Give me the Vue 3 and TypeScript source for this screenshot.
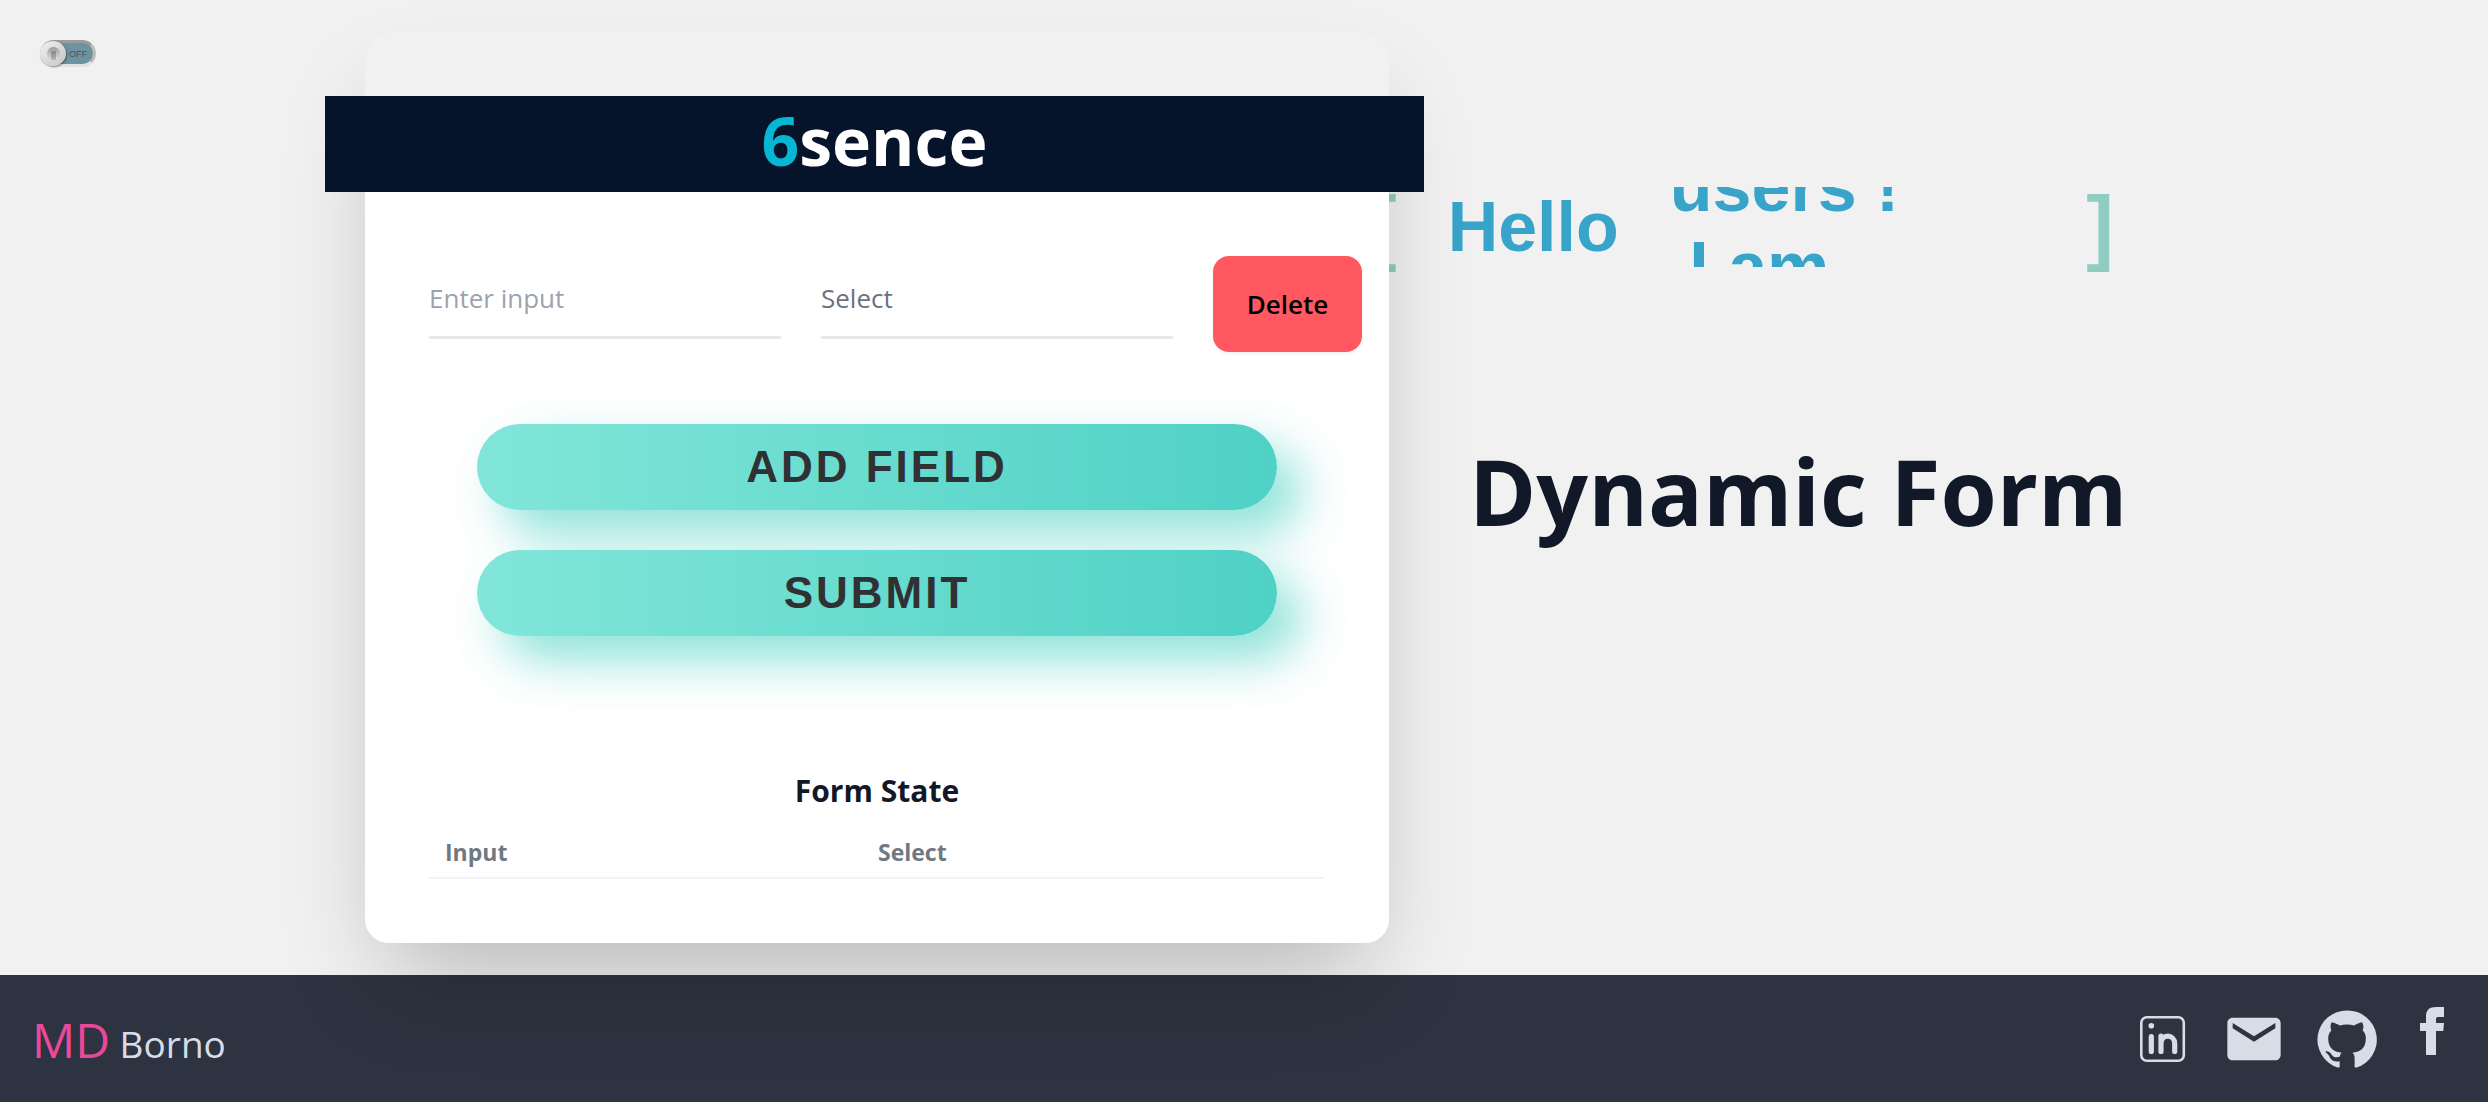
<script setup lang="ts">
import { ref } from 'vue'

interface Field {
  id: number
  text: string
  choice: string
}

const dark = ref(false)
const fields = ref<Field[]>([{ id: 1, text: '', choice: '' }])
const saved = ref<Field[]>([])
const phrases: string[] = ['users !', ' I am']

function addField(): void {
  fields.value.push({ id: Date.now(), text: '', choice: '' })
}

function removeField(id: number): void {
  fields.value = fields.value.filter((f) => f.id !== id)
}

function submit(): void {
  saved.value = fields.value.map((f) => ({ ...f }))
}
</script>

<template>
  <div class="page">
    <main class="main">
      <div class="theme">
        <label class="toggle">
          <input v-model="dark" type="checkbox" aria-label="Dark theme" />
          <span class="toggle-text">OFF</span>
          <span class="knob"><span class="knob-dip"></span></span>
        </label>
      </div>

      <section class="card">
        <header class="banner">
          <h2 class="logo"><span class="logo-mark">6</span>sence</h2>
        </header>
        <div class="body">
          <form @submit.prevent="submit">
            <div v-for="f in fields" :key="f.id" class="row">
              <input v-model="f.text" class="field" type="text" placeholder="Enter input" aria-label="Input" />
              <select v-model="f.choice" class="field" aria-label="Select">
                <option value="">Select</option>
                <option value="one">Option 1</option>
                <option value="two">Option 2</option>
              </select>
              <button class="delete" type="button" @click="removeField(f.id)">Delete</button>
            </div>
            <div class="actions">
              <button class="pill" type="button" @click="addField">ADD FIELD</button>
              <button class="pill" type="submit">SUBMIT</button>
            </div>
          </form>

          <h3 class="state-title">Form State</h3>
          <table class="state">
            <thead>
              <tr>
                <th scope="col">Input</th>
                <th scope="col">Select</th>
              </tr>
            </thead>
            <tbody>
              <tr v-for="s in saved" :key="s.id">
                <td>{{ s.text }}</td>
                <td>{{ s.choice }}</td>
              </tr>
            </tbody>
          </table>
        </div>
      </section>

      <section class="intro">
        <div class="greeting">
          <span class="bracket">[</span>
          <span class="hello">Hello</span>
          <ul class="phrases">
            <li v-for="p in phrases" :key="p">{{ p }}</li>
          </ul>
          <span class="bracket">]</span>
        </div>
        <h1 class="title">Dynamic Form</h1>
      </section>
    </main>

    <footer class="footer">
      <p class="brand"><span class="brand-first">MD</span> Borno</p>
      <nav class="social">
        <a href="#linkedin" aria-label="LinkedIn">
          <svg width="64" height="64" viewBox="0 0 64 64" fill="none" stroke="currentColor" stroke-linecap="round">
            <rect x="12.3" y="10.3" width="42.5" height="43.5" rx="5.5" stroke-width="2.6" />
            <circle cx="22.3" cy="18.8" r="2.8" fill="currentColor" stroke="none" />
            <path d="M22.3 29.5V44.5M32 44.5V29M32 36.5c0-4.2 3-7.3 6.8-7.3s6.9 3.1 6.9 7.3v8" stroke-width="5.2" />
          </svg>
        </a>
        <a href="#mail" aria-label="Email">
          <svg width="64" height="64" viewBox="0 0 24 24" fill="currentColor">
            <path d="M20 4H4c-1.1 0-1.99.9-1.99 2L2 18c0 1.1.9 2 2 2h16c1.1 0 2-.9 2-2V6c0-1.1-.9-2-2-2zm0 4l-8 5-8-5V6l8 5 8-5v2z" />
          </svg>
        </a>
        <a href="#github" aria-label="GitHub">
          <svg width="64" height="64" viewBox="0 0 24 24" fill="currentColor">
            <path d="M12 1.27a11 11 0 00-3.48 21.46c.55.09.73-.28.73-.55v-1.84c-3.03.64-3.67-1.46-3.67-1.46-.55-1.29-1.28-1.65-1.28-1.65-.92-.65.1-.65.1-.65 1.1 0 1.73 1.1 1.73 1.1.92 1.65 2.57 1.2 3.21.92a2 2 0 01.64-1.47c-2.47-.27-5.04-1.19-5.04-5.5 0-1.1.46-2.1 1.2-2.84a3.76 3.76 0 010-2.93s.91-.28 3.11 1.1c1.8-.49 3.7-.49 5.5 0 2.1-1.38 3.02-1.1 3.02-1.1a3.76 3.76 0 01.1 2.93c.83.74 1.2 1.74 1.2 2.94 0 4.21-2.57 5.13-5.04 5.4.45.37.82.92.82 2.02v3.03c0 .27.1.64.73.55A11 11 0 0012 1.27" />
          </svg>
        </a>
        <a href="#facebook" aria-label="Facebook">
          <svg width="48" height="48" viewBox="0 0 24 24" fill="currentColor">
            <path d="M9 8h-3v4h3v12h5v-12h3.642l.358-4h-4v-1.667c0-.955.192-1.333 1.115-1.333h2.885v-5h-3.808c-3.596 0-5.192 1.583-5.192 4.615v3.385z" />
          </svg>
        </a>
      </nav>
    </footer>
  </div>
</template>

<style>
body {
  margin: 0;
  background: #f1f1f1;
}
</style>

<style scoped>
.page {
  display: flex;
  flex-direction: column;
  min-height: 100vh;
  font-family: 'Open Sans', 'Noto Sans', sans-serif;
  color: #111827;
}

.page *,
.page *::before {
  box-sizing: border-box;
}

h1,
h2,
h3,
p,
ul {
  margin: 0;
  padding: 0;
}

.main {
  display: grid;
  grid-template-columns: 1fr minmax(0, 1024px) minmax(0, 734px) 1fr;
  padding: 32px 0;
}

.theme {
  padding: 8px 0 0 40px;
}

/* Theme switch */
.toggle {
  position: relative;
  display: flex;
  width: 56px;
  height: 27px;
  cursor: pointer;
}

.toggle input {
  appearance: none;
  width: 100%;
  height: 100%;
  margin: 0;
  border: 3px solid;
  border-color: #9c9c9c #bdbdbd #e2e2e2 #b0b0b0;
  border-radius: 14px;
  background: #6f929f;
}

.toggle-text {
  position: absolute;
  top: 8px;
  right: 9px;
  font-family: 'Liberation Sans', Arial, sans-serif;
  font-size: 9px;
  line-height: 12px;
  color: #3f5660;
}

.knob {
  position: absolute;
  top: 1px;
  left: 0;
  display: flex;
  align-items: center;
  justify-content: center;
  width: 26px;
  height: 25px;
  border-radius: 50%;
  background: linear-gradient(135deg, #f2f2f2, #c4c4c4);
  box-shadow: 1px 1px 2px rgba(0, 0, 0, 0.4);
}

.knob-dip {
  width: 13px;
  height: 13px;
  border-radius: 50%;
  background:
    linear-gradient(#8a8a8a, #b4b4b4) center bottom / 5px 9px no-repeat,
    linear-gradient(#9a9a9a, #e0e0e0);
}

/* Form card */
.card {
  position: relative;
  z-index: 1;
  padding-top: 64px;
  border-radius: 32px 32px 24px 24px;
  background: linear-gradient(#f1f1f1 96px, #fff 96px);
  box-shadow: 0 50px 100px -24px rgba(0, 0, 0, 0.25);
}

.banner {
  display: flex;
  justify-content: center;
  height: 96px;
  margin: 0 -35px 0 -40px;
  background: #05142a;
}

.logo {
  font-size: 66px;
  line-height: 88px;
  color: #fff;
}

.logo-mark {
  color: #06b6d4;
}

.body {
  padding: 64px;
}

.row {
  display: grid;
  grid-template-columns: 1fr 1fr 149px;
  gap: 40px;
  align-items: start;
  margin-right: -37px;
}

.field {
  appearance: none;
  width: 100%;
  height: 83px;
  padding: 10px 0 6px;
  border: 0;
  border-bottom: 3px solid #e5e7eb;
  border-radius: 0;
  outline: 0;
  background: transparent;
  font-family: inherit;
  font-size: 26px;
  color: #6b7280;
}

.field::placeholder {
  color: #9ca3af;
  opacity: 1;
}

.delete {
  height: 96px;
  padding: 0;
  border: 0;
  border-radius: 16px;
  background: #ff5861;
  box-shadow: 0 2px 4px rgba(0, 0, 0, 0.05);
  font-family: inherit;
  font-size: 26px;
  font-weight: 600;
  color: #000;
  cursor: pointer;
}

.actions {
  display: flex;
  flex-direction: column;
  align-items: center;
  gap: 40px;
  margin-top: 72px;
}

.pill {
  width: 100%;
  max-width: 800px;
  height: 86px;
  padding: 0;
  border: 0;
  border-radius: 43px;
  background: linear-gradient(90deg, #81e6d9, #4fd1c5);
  box-shadow: 24px 24px 48px rgba(79, 209, 197, 0.64);
  font-family: 'Liberation Sans', Arial, sans-serif;
  font-size: 44px;
  font-weight: 700;
  letter-spacing: 3px;
  color: #313133;
  cursor: pointer;
}

.state-title {
  margin-top: 131px;
  font-size: 30px;
  line-height: 48px;
  text-align: center;
}

.state {
  width: 100%;
  border-collapse: collapse;
  table-layout: fixed;
}

.state th,
.state td {
  height: 63px;
  padding: 12px 16px 0;
  border-bottom: 2px solid #f3f4f5;
  font-size: 23px;
  line-height: 32px;
  text-align: left;
}

.state th {
  color: #707882;
}

.state th:first-child {
  width: 433px;
}

/* Greeting and title */
.intro {
  padding: 155px 0 0 80px;
}

.greeting {
  display: flex;
  gap: 51px;
  height: 80px;
  margin: 0 9px 0 -100px;
  font-family: 'Liberation Sans', Arial, sans-serif;
  font-size: 70px;
  font-weight: 700;
  line-height: 80px;
  color: #38a4c9;
}

.bracket {
  font-size: 83px;
  color: #8fcdc0;
}

.phrases {
  flex: 1;
  height: 80px;
  overflow: hidden;
  list-style: none;
  white-space: pre;
}

.phrases li:first-child {
  margin-top: -40px;
}

.title {
  margin-top: 172px;
  font-size: 91px;
  line-height: 104px;
  white-space: nowrap;
}

/* Footer */
.footer {
  display: flex;
  flex: 1;
  align-items: center;
  justify-content: space-between;
  min-height: 127px;
  padding: 0 32px;
  background: #2d3340;
  color: #d6dde6;
}

.brand {
  padding-top: 6px;
  font-size: 37px;
  line-height: 56px;
}

.brand-first {
  font-size: 48px;
  color: #ec4899;
}

.social {
  display: flex;
  gap: 29px;
}

.social a {
  display: flex;
  color: inherit;
}
</style>
